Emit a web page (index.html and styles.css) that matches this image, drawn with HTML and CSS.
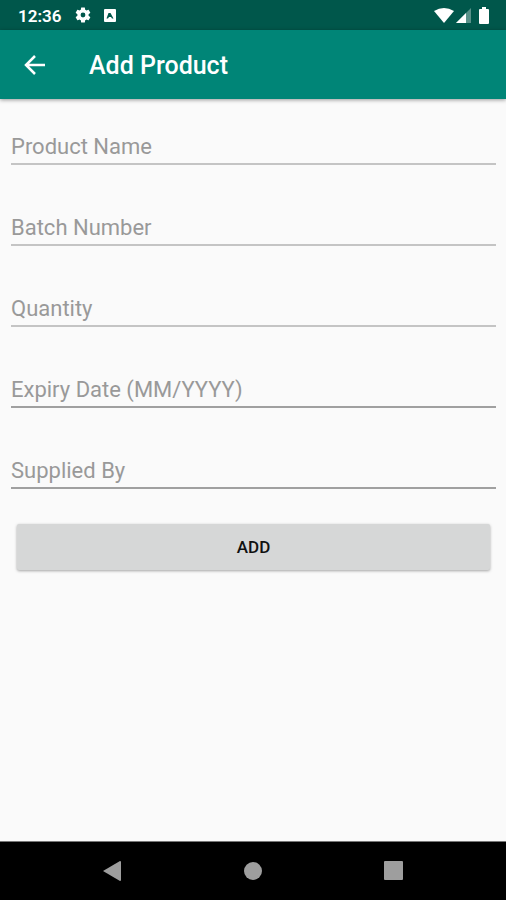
FILE: index.html
```html
<!DOCTYPE html>
<html lang="en">
<head>
<meta charset="utf-8">
<meta name="viewport" content="width=device-width, initial-scale=1">
<title>Add Product</title>
<link rel="stylesheet" href="styles.css">
</head>
<body>
<div class="status">
  <span class="clock">12:36</span>
  <svg class="gear" width="18" height="18" viewBox="0 0 24 24" aria-hidden="true"><path fill="#fff" d="M19.43 12.98c.04-.32.07-.64.07-.98s-.03-.66-.07-.98l2.11-1.65c.19-.15.24-.42.12-.64l-2-3.46c-.12-.22-.39-.3-.61-.22l-2.49 1c-.52-.4-1.08-.73-1.69-.98l-.38-2.65C14.46 2.18 14.25 2 14 2h-4c-.25 0-.46.18-.49.42l-.38 2.65c-.61.25-1.17.59-1.69.98l-2.49-1c-.23-.09-.49 0-.61.22l-2 3.46c-.13.22-.07.49.12.64l2.11 1.65c-.04.32-.07.65-.07.98s.03.66.07.98l-2.11 1.65c-.19.15-.24.42-.12.64l2 3.46c.12.22.39.3.61.22l2.49-1c.52.4 1.08.73 1.69.98l.38 2.65c.03.24.24.42.49.42h4c.25 0 .46-.18.49-.42l.38-2.65c.61-.25 1.17-.59 1.69-.98l2.49 1c.23.09.49 0 .61-.22l2-3.46c.12-.22.07-.49-.12-.64l-2.11-1.65zM12 15.2a3.2 3.2 0 1 1 0-6.400 3.200 3.200 0 0 1 0 6.400z"/></svg>
  <svg width="12" height="13" viewBox="0 0 12 13" aria-hidden="true"><rect width="12" height="13" rx="1" fill="#fff"/><path d="M2.500 9.500 4.500 4h2l3 5.500H8L7 8H5l-1 1.500z" fill="#00574b"/></svg>
  <span class="signals">
    <svg width="20" height="15" viewBox="0 0 20 15" aria-hidden="true"><path d="M0 3Q10-3 20 3L10 15z" fill="#fff"/></svg>
    <svg width="15" height="15" viewBox="0 0 15 15" aria-hidden="true"><path d="M0 15 15 0v15z" fill="#fff" opacity=".35"/><path d="M0 15 10 5v10z" fill="#fff"/></svg>
    <svg class="battery" width="10" height="17" viewBox="0 0 10 17" aria-hidden="true"><path d="M3 0h4v2h2q1 0 1 1v13q0 1-1 1H1q-1 0-1-1V3q0-1 1-1h2z" fill="#fff"/></svg>
  </span>
</div>
<header class="appbar">
  <button class="back" type="button" aria-label="Back"><svg width="22" height="20" viewBox="0 0 22 20" aria-hidden="true"><path d="M21 10H3M11 1 2 10l9 9" fill="none" stroke="#fff" stroke-width="2.500"/></svg></button>
  <h1>Add Product</h1>
</header>
<main>
  <form class="form">
    <input class="field" type="text" placeholder="Product Name" aria-label="Product Name">
    <input class="field" type="text" placeholder="Batch Number" aria-label="Batch Number">
    <input class="field" type="text" placeholder="Quantity" aria-label="Quantity">
    <input class="field dark" type="text" placeholder="Expiry Date (MM/YYYY)" aria-label="Expiry Date (MM/YYYY)">
    <input class="field dark" type="text" placeholder="Supplied By" aria-label="Supplied By">
    <button class="add" type="button">ADD</button>
  </form>
</main>
<nav class="navbar">
  <button type="button" aria-label="Back"><svg width="20" height="22" viewBox="0 0 20 22" aria-hidden="true"><path d="M0 11 17 1q1 0 1 1v18q0 1-1 1z" fill="#9e9e9e"/></svg></button>
  <button type="button" aria-label="Home"><svg width="20" height="20" viewBox="0 0 20 20" aria-hidden="true"><circle cx="10" cy="10" r="9" fill="#9e9e9e"/></svg></button>
  <button type="button" aria-label="Recent apps"><svg width="20" height="20" viewBox="0 0 20 20" aria-hidden="true"><rect x="1" width="19" height="19" rx="1" fill="#9e9e9e"/></svg></button>
</nav>
</body>
</html>
```
FILE: styles.css
```css
* { box-sizing: border-box; }
body {
  margin: 0;
  min-height: 100vh;
  display: flex;
  flex-direction: column;
  background: #fafafa;
  font-family: Roboto, sans-serif;
}
svg { display: block; }
button {
  border: 0;
  padding: 0;
  background: none;
  font-family: inherit;
}
.status {
  height: 30px;
  padding: 0 17px 0 18px;
  display: flex;
  align-items: center;
  background: #00574b;
  color: #fff;
}
.clock {
  padding-top: 2px;
  font-size: 17px;
  font-weight: 600;
  line-height: 30px;
}
.gear { margin: 0 12px 0 13px; }
.signals {
  margin-left: auto;
  display: flex;
  align-items: center;
  gap: 2px;
}
.battery { margin-left: 6px; }
.appbar {
  height: 69px;
  padding: 0 24px;
  display: flex;
  align-items: center;
  gap: 43px;
  background: #008577;
  box-shadow: 0 1px 4px rgba(0, 0, 0, 0.4);
}
h1 {
  margin: 0;
  padding-top: 2px;
  color: #fff;
  font-size: 25px;
  font-weight: 500;
  line-height: 32px;
}
main {
  flex: 1;
  padding: 26px 10px 26px 11px;
}
.form {
  display: flex;
  flex-direction: column;
  gap: 41px;
}
.field {
  width: 100%;
  height: 40px;
  padding: 4px 0 0;
  border: 0;
  border-bottom: 2px solid #c4c4c4;
  border-radius: 0;
  background: none;
  font: 400 22px/34px Roboto, sans-serif;
  color: #222;
  outline: 0;
}
.field::placeholder {
  color: #999;
  opacity: 1;
}
.dark { border-bottom-color: #a0a0a0; }
.add {
  height: 46px;
  margin: -6px 6px 0;
  border-radius: 2px;
  background: #d6d7d7;
  box-shadow: 0 1px 3px rgba(0, 0, 0, 0.35);
  color: #111;
  font-size: 17px;
  font-weight: 500;
}
.navbar {
  height: 59px;
  padding: 0 43px;
  display: grid;
  grid-template-columns: repeat(3, 1fr);
  align-items: center;
  justify-items: center;
  border-top: 1px solid #777;
  background: #000;
}
```
